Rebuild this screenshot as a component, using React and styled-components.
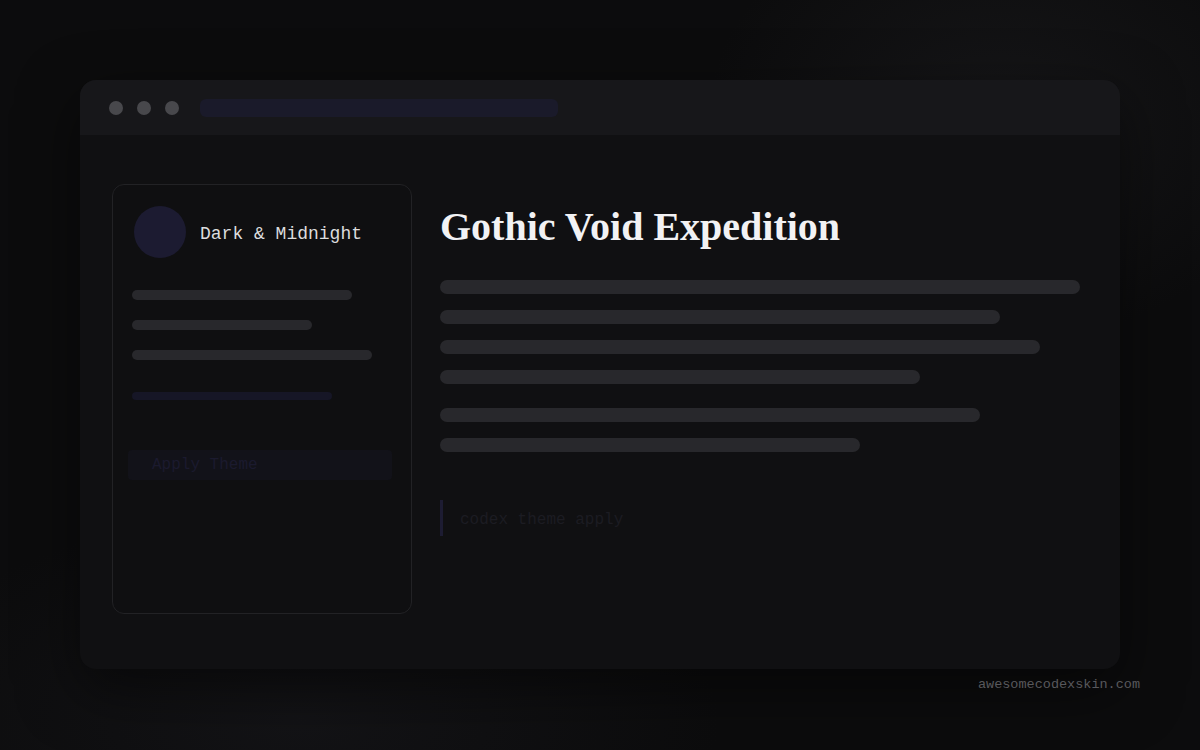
import React from "react";
import styled, { createGlobalStyle } from "styled-components";

const GlobalStyle = createGlobalStyle`
  html, body {
    margin: 0;
    padding: 0;
    background: #0c0c0d;
  }
  * {
    box-sizing: border-box;
  }
`;

const Page = styled.div`
  width: 1200px;
  height: 750px;
  padding: 80px 60px 0 80px;
  display: flex;
  flex-direction: column;
  background:
    radial-gradient(ellipse 420px 320px at 1000px 120px, rgba(40, 40, 44, 0.35), transparent 70%),
    radial-gradient(ellipse 600px 300px at 300px 720px, rgba(24, 24, 28, 0.6), transparent 70%),
    #0c0c0d;
  font-family: "Liberation Mono", monospace;
`;

const Window = styled.div`
  width: 1040px;
  height: 589px;
  border-radius: 16px;
  background: #101012;
  overflow: hidden;
  display: flex;
  flex-direction: column;
  box-shadow: 0 20px 60px rgba(0, 0, 0, 0.5);
`;

const TopBar = styled.div`
  height: 55px;
  flex-shrink: 0;
  background: #17171a;
  display: flex;
  align-items: center;
  padding-left: 29px;
  gap: 14px;
`;

const Dot = styled.span`
  width: 14px;
  height: 14px;
  border-radius: 50%;
  background: #48484c;
`;

const AddressBar = styled.div`
  width: 358px;
  height: 18px;
  margin-left: 7px;
  border-radius: 6px;
  background: #1a1a2a;
`;

const Content = styled.div`
  flex: 1;
  display: flex;
  padding: 49px 40px 55px 32px;
  gap: 28px;
`;

const Card = styled.div`
  width: 300px;
  flex-shrink: 0;
  border: 1px solid #222225;
  border-radius: 12px;
  background: #0f0f11;
  padding: 21px 19px;
  display: flex;
  flex-direction: column;
`;

const CardHeader = styled.div`
  display: flex;
  align-items: center;
  gap: 14px;
  margin-left: 2px;
`;

const Avatar = styled.div`
  width: 52px;
  height: 52px;
  border-radius: 50%;
  background: #1c1b31;
`;

const CardTitle = styled.span`
  font-family: "Liberation Mono", monospace;
  font-size: 18px;
  color: #dcdcde;
  padding-top: 3px;
`;

const SkeletonStack = styled.div`
  display: flex;
  flex-direction: column;
  gap: ${(p) => p.$gap}px;
  margin-top: ${(p) => p.$top}px;
`;

const Bar = styled.div`
  width: ${(p) => p.$w}px;
  height: ${(p) => p.$h || 10}px;
  border-radius: ${(p) => (p.$h || 10) / 2}px;
  background: ${(p) => p.$color || "#28282c"};
`;

const ApplyButton = styled.div`
  margin: 50px 0 0 -4px;
  width: 264px;
  height: 30px;
  background: #121219;
  border-radius: 4px;
  display: flex;
  align-items: center;
  padding-left: 24px;
  font-family: "Liberation Mono", monospace;
  font-size: 16px;
  color: #1b1a2e;
`;

const Main = styled.div`
  flex: 1;
  display: flex;
  flex-direction: column;
  padding-top: 20px;
`;

const Title = styled.h1`
  margin: 0;
  font-family: "Liberation Serif", "Times New Roman", serif;
  font-weight: 700;
  font-size: 40px;
  line-height: 46px;
  color: #f2f2f4;
`;

const Paragraph = styled.div`
  display: flex;
  flex-direction: column;
  gap: 16px;
  margin-top: ${(p) => p.$top}px;
`;

const CodeLine = styled.div`
  margin-top: 48px;
  border-left: 3px solid #1d1c32;
  height: 36px;
  display: flex;
  align-items: center;
  padding-left: 17px;
  padding-top: 4px;
  font-family: "Liberation Mono", monospace;
  font-size: 16px;
  color: #1c1c22;
`;

const Footer = styled.div`
  margin-top: 8px;
  text-align: right;
  font-family: "Liberation Mono", monospace;
  font-size: 13.5px;
  color: #58585c;
`;

const mainLines = [
  [640, 560, 600, 480],
  [540, 420],
];

export default function App() {
  return (
    <>
      <GlobalStyle />
      <Page>
        <Window>
          <TopBar>
            <Dot />
            <Dot />
            <Dot />
            <AddressBar />
          </TopBar>
          <Content>
            <Card>
              <CardHeader>
                <Avatar />
                <CardTitle>Dark &amp; Midnight</CardTitle>
              </CardHeader>
              <SkeletonStack $gap={20} $top={32}>
                <Bar $w={220} />
                <Bar $w={180} />
                <Bar $w={240} />
              </SkeletonStack>
              <SkeletonStack $gap={0} $top={32}>
                <Bar $w={200} $h={8} $color="#161626" />
              </SkeletonStack>
              <ApplyButton>Apply Theme</ApplyButton>
            </Card>
            <Main>
              <Title>Gothic Void Expedition</Title>
              <Paragraph $top={30}>
                {mainLines[0].map((w, i) => (
                  <Bar key={i} $w={w} $h={14} />
                ))}
              </Paragraph>
              <Paragraph $top={24}>
                {mainLines[1].map((w, i) => (
                  <Bar key={i} $w={w} $h={14} />
                ))}
              </Paragraph>
              <CodeLine>codex theme apply</CodeLine>
            </Main>
          </Content>
        </Window>
        <Footer>awesomecodexskin.com</Footer>
      </Page>
    </>
  );
}
